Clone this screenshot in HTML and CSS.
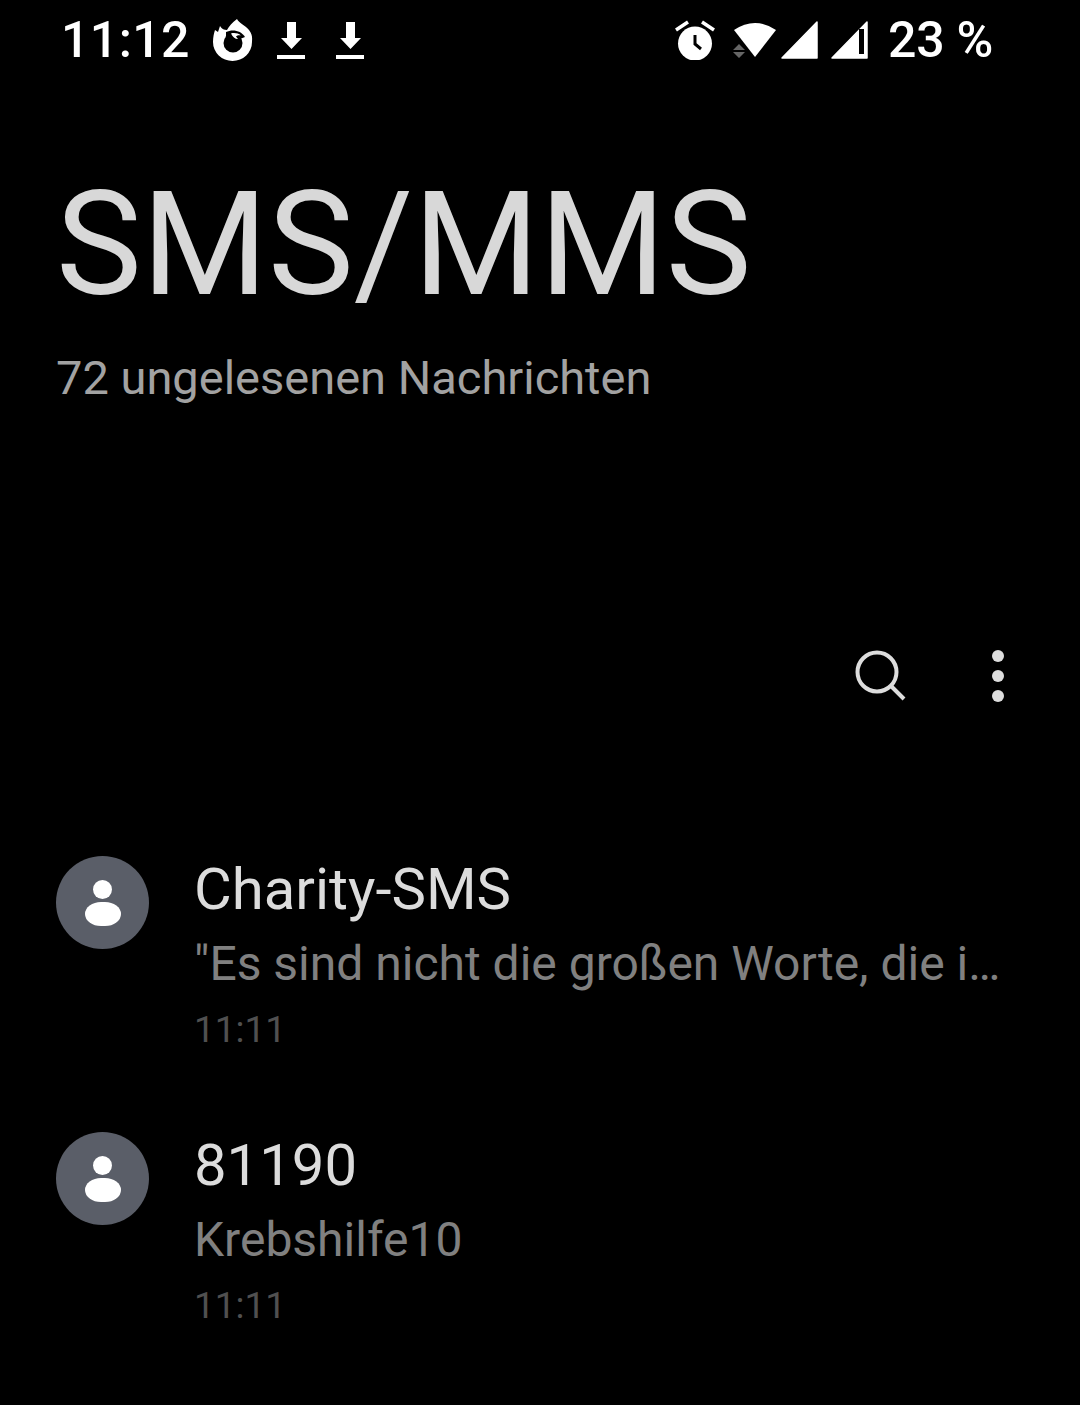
FILE: index.html
```html
<!DOCTYPE html>
<html lang="de">
<head>
    <meta charset="UTF-8">
    <meta name="viewport" content="width=device-width, initial-scale=1.0">
    <title>SMS/MMS</title>
    <link rel="stylesheet" href="styles.css">
</head>
<body>
    <div class="status-bar">
        <div class="status-left">
            <span class="clock">11:12</span>
            <svg class="icon-firefox" width="42" height="42" viewBox="0 0 42 42">
                <path fill="#fff" d="M25 0C27 4 33 6 37 11C41 16 40 20 40 23A19.5 19 0 0 1 1 23C1 18 2 14 3 11L6 13L8 7C10 10 12 11 15 11C17 7 20 4 25 0z"/>
                <circle cx="21" cy="24" r="9.5" fill="#000"/>
                <path fill="#000" d="M14 13C20 10 29 11 33 18L28 20L14 20z"/>
                <path fill="#fff" d="M19 14.500C22 13.500 26 14 29 16.500C27 16 25 16.500 24 17.500L26 20C23 20 20.500 18 19 14.500z"/>
            </svg>
            <svg class="icon-dl" width="28" height="40" viewBox="0 0 28 40">
                <path fill="#fff" d="M10 2h9v16h6L14.500 29 4 18h6zM0 35h28v4H0z"/>
            </svg>
            <svg class="icon-dl" width="28" height="40" viewBox="0 0 28 40">
                <path fill="#fff" d="M10 2h9v16h6L14.500 29 4 18h6zM0 35h28v4H0z"/>
            </svg>
        </div>
        <div class="status-right">
            <svg class="icon-alarm" width="40" height="40" viewBox="0 0 40 40">
                <circle cx="20" cy="23.500" r="17" fill="#fff"/>
                <path fill="none" stroke="#fff" stroke-width="3.500" d="M1 10L13 2M27 2L39 10"/>
                <path fill="none" stroke="#000" stroke-width="3" d="M20 15v9l6 5"/>
            </svg>
            <svg class="icon-wifi" width="45" height="40" viewBox="0 0 45 40">
                <path fill="#fff" d="M2 10Q23 -4 44 10L23 37z"/>
                <path fill="#666" d="M1 30l6-6 6 6zM1 32h12l-6 6z"/>
            </svg>
            <svg class="icon-signal" width="37" height="40" viewBox="0 0 37 40">
                <path fill="#fff" stroke="#fff" stroke-width="1.500" stroke-linejoin="round" d="M36 2v36H1z"/>
            </svg>
            <svg class="icon-signal" width="37" height="40" viewBox="0 0 37 40">
                <path fill="#fff" stroke="#fff" stroke-width="1.500" stroke-linejoin="round" d="M36 2v36H1z"/>
                <path fill="#000" d="M28 9h5v25h-5z"/>
            </svg>
            <span class="battery">23 %</span>
        </div>
    </div>

    <div class="header">
        <h1>SMS/MMS</h1>
        <p class="unread">72 ungelesenen Nachrichten</p>
    </div>

    <div class="toolbar">
        <svg class="icon-search" width="54" height="54" viewBox="0 0 54 54">
            <circle cx="23" cy="23" r="19.500" fill="none" stroke="#ddd" stroke-width="4"/>
            <path fill="none" stroke="#ddd" stroke-width="4" d="M37 37l13 13"/>
        </svg>
        <div class="more">
            <span></span>
            <span></span>
            <span></span>
        </div>
    </div>

    <div class="thread-list">
        <div class="thread">
            <div class="avatar">
                <span class="avatar-head"></span>
                <span class="avatar-body"></span>
            </div>
            <div class="thread-text">
                <div class="name">Charity-SMS</div>
                <div class="preview">"Es sind nicht die großen Worte, die i…</div>
                <div class="time">11:11</div>
            </div>
        </div>
        <div class="thread">
            <div class="avatar">
                <span class="avatar-head"></span>
                <span class="avatar-body"></span>
            </div>
            <div class="thread-text">
                <div class="name">81190</div>
                <div class="preview">Krebshilfe10</div>
                <div class="time">11:11</div>
            </div>
        </div>
    </div>
</body>
</html>
```

FILE: styles.css
```css
* {
    margin: 0;
    padding: 0;
    box-sizing: border-box;
    font-family: Roboto, sans-serif;
}

body {
    background-color: #000;
    color: #fff;
    width: 1080px;
    height: 1405px;
    overflow: hidden;
}

svg {
    display: block;
    flex: none;
}

/* Status bar */
.status-bar {
    height: 80px;
    display: flex;
    justify-content: space-between;
    align-items: center;
    padding: 0 87px 0 61px;
}

.status-left, .status-right {
    display: flex;
    align-items: center;
}

.clock {
    font-size: 50px;
    font-weight: 500;
    letter-spacing: 0.4px;
    margin-right: 22px;
}

.icon-firefox {
    margin-right: 23px;
}

.icon-dl {
    margin-right: 31px;
}

.icon-alarm {
    margin-right: 17px;
}

.icon-wifi {
    margin-right: 4px;
}

.icon-signal {
    margin-right: 13px;
}

.battery {
    font-size: 50px;
    font-weight: 500;
    letter-spacing: -0.3px;
    margin-left: 7px;
}

/* Header */
.header {
    padding: 90px 0 0 56px;
}

h1 {
    font-size: 144.500px;
    font-weight: 400;
    line-height: 150px;
    color: #d8d8d8;
}

.unread {
    font-size: 47px;
    line-height: 54px;
    color: #a2a2a2;
    margin-top: 31px;
}

/* Toolbar */
.toolbar {
    display: flex;
    justify-content: flex-end;
    align-items: center;
    gap: 84px;
    padding: 244px 76px 0 0;
}

.more {
    display: flex;
    flex-direction: column;
    gap: 8px;
}

.more span {
    width: 12px;
    height: 12px;
    border-radius: 50%;
    background-color: #ddd;
}

/* Threads */
.thread-list {
    padding: 153px 0 0 56px;
}

.thread {
    display: flex;
    height: 276px;
}

.avatar {
    width: 93px;
    height: 93px;
    border-radius: 50%;
    background-color: #5a5e68;
    display: flex;
    flex-direction: column;
    align-items: center;
    justify-content: center;
    gap: 3px;
    margin-right: 45px;
    flex: none;
}

.avatar-head {
    width: 19px;
    height: 19px;
    border-radius: 50%;
    background-color: #fff;
}

.avatar-body {
    width: 36px;
    height: 24px;
    border-radius: 16px / 12px;
    background-color: #fff;
}

.name {
    font-size: 58px;
    line-height: 66px;
    color: #dcdcdc;
}

.name, .preview {
    white-space: nowrap;
}

.preview {
    font-size: 48px;
    line-height: 56px;
    color: #808080;
    margin-top: 14px;
}

.time {
    font-size: 37px;
    line-height: 42px;
    color: #505050;
    margin-top: 17px;
}
```
